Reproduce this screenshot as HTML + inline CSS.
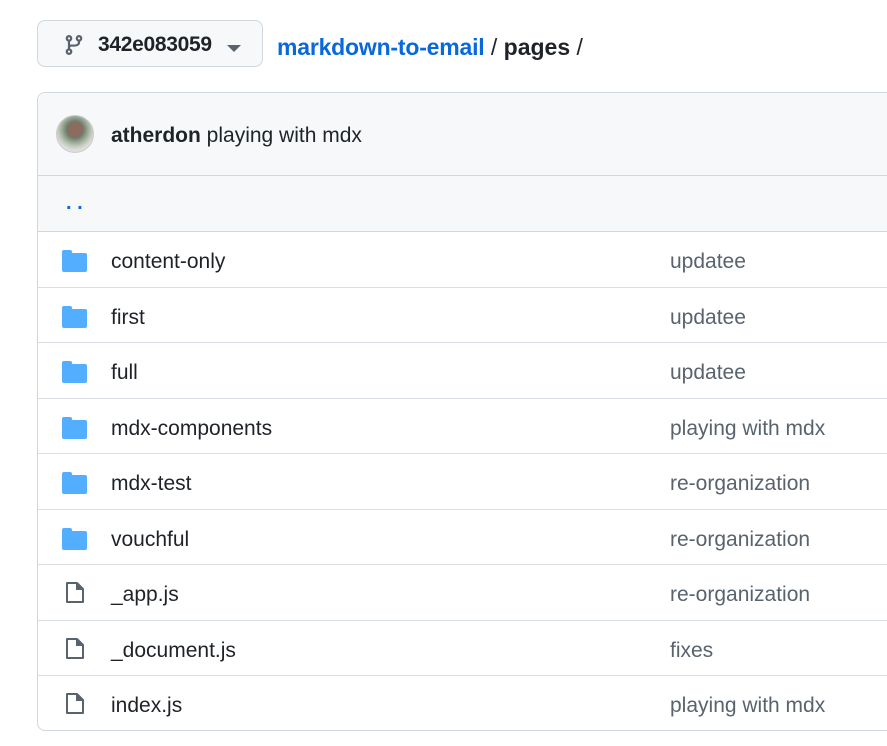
<!DOCTYPE html>
<html><head><style>
body{margin:0;background:#fff;font-family:"Liberation Sans",sans-serif;color:#1f2328;width:887px;height:746px;overflow:hidden;position:relative}
.btn{position:absolute;left:37px;top:20px;width:226px;height:47px;border:1px solid #d0d7de;border-radius:8px;background:#f6f8fa;box-sizing:border-box}
.btn .t{position:absolute;left:60px;top:12px;font-size:21px;font-weight:bold;color:#1f2328;letter-spacing:-0.3px}
.crumb{position:absolute;left:277px;top:33px;font-size:23px;line-height:28px}
.crumb a{color:#0969da;font-weight:bold;text-decoration:none;letter-spacing:-0.2px}
.box{position:absolute;left:37px;top:92px;width:900px;height:639px;border:1px solid #d0d7de;border-radius:8px;box-sizing:border-box;overflow:hidden}
.hdr{height:82px;background:#f6f8fa;border-bottom:1px solid #d0d7de;position:relative}
.av{position:absolute;left:18px;top:22px;width:36px;height:36px;border-radius:50%;background:radial-gradient(circle at 50% 38%,#8a6d5e 0 28%,#6b7d6c 29%,#b8c4b0 55%,#ddd 70%);border:1px solid #ccc}
.hdr .t{position:absolute;left:73px;top:31px;font-size:21px}
.dots{height:55px;background:#f6f8fa;border-bottom:1px solid #d0d7de;position:relative}
.dots span{position:absolute;left:28px;top:16px;color:#0969da;font-size:20px;font-weight:bold}
.row{height:55.5px;border-bottom:1px solid #d8dee4;position:relative;box-sizing:border-box}
.row:last-child{border-bottom:none}
.row .n{position:absolute;left:73px;top:18px;font-size:21px}
.row .m{position:absolute;left:632px;top:18px;font-size:21px;color:#59636e}
.row svg{position:absolute;left:24px;top:18px}
</style></head><body>
<div class="btn"><svg style="position:absolute;left:27px;top:14px" width="18" height="20" viewBox="0 0 16 18" fill="none" stroke="#59636e" stroke-width="2"><circle cx="3.5" cy="3" r="2"/><circle cx="3.5" cy="15" r="2"/><circle cx="12.5" cy="3" r="2"/><path d="M3.5 5v8M12.5 5v1.5c0 2-2 3-4 3H5.5c-1 0-2 .8-2 2"/></svg><span class="t">342e083059</span><svg style="position:absolute;left:189px;top:24px" width="14" height="8"><path d="M0 0h14L7 7z" fill="#59636e"/></svg></div>
<div class="crumb"><a>markdown-to-email</a> / <b>pages</b> /</div>
<div class="box">
<div class="hdr"><div class="av"></div><div class="t"><b>atherdon</b> playing with mdx</div></div>
<div class="dots"><span>. .</span></div>
<div class="row"><svg width="25" height="22"><rect x="0" y="0" width="10" height="6" rx="2" fill="#54aeff"/><rect x="0" y="3" width="25" height="19" rx="2" fill="#54aeff"/></svg><span class="n">content-only</span><span class="m">updatee</span></div>
<div class="row"><svg width="25" height="22"><rect x="0" y="0" width="10" height="6" rx="2" fill="#54aeff"/><rect x="0" y="3" width="25" height="19" rx="2" fill="#54aeff"/></svg><span class="n">first</span><span class="m">updatee</span></div>
<div class="row"><svg width="25" height="22"><rect x="0" y="0" width="10" height="6" rx="2" fill="#54aeff"/><rect x="0" y="3" width="25" height="19" rx="2" fill="#54aeff"/></svg><span class="n">full</span><span class="m">updatee</span></div>
<div class="row"><svg width="25" height="22"><rect x="0" y="0" width="10" height="6" rx="2" fill="#54aeff"/><rect x="0" y="3" width="25" height="19" rx="2" fill="#54aeff"/></svg><span class="n">mdx-components</span><span class="m">playing with mdx</span></div>
<div class="row"><svg width="25" height="22"><rect x="0" y="0" width="10" height="6" rx="2" fill="#54aeff"/><rect x="0" y="3" width="25" height="19" rx="2" fill="#54aeff"/></svg><span class="n">mdx-test</span><span class="m">re-organization</span></div>
<div class="row"><svg width="25" height="22"><rect x="0" y="0" width="10" height="6" rx="2" fill="#54aeff"/><rect x="0" y="3" width="25" height="19" rx="2" fill="#54aeff"/></svg><span class="n">vouchful</span><span class="m">re-organization</span></div>
<div class="row"><svg width="20" height="22" style="left:27px;top:17px"><path d="M2 1h10l6 6v13H2z" fill="none" stroke="#59636e" stroke-width="2" stroke-linejoin="round"/><path d="M11 1v7h7" fill="#59636e"/></svg><span class="n">_app.js</span><span class="m">re-organization</span></div>
<div class="row"><svg width="20" height="22" style="left:27px;top:17px"><path d="M2 1h10l6 6v13H2z" fill="none" stroke="#59636e" stroke-width="2" stroke-linejoin="round"/><path d="M11 1v7h7" fill="#59636e"/></svg><span class="n">_document.js</span><span class="m">fixes</span></div>
<div class="row"><svg width="20" height="22" style="left:27px;top:17px"><path d="M2 1h10l6 6v13H2z" fill="none" stroke="#59636e" stroke-width="2" stroke-linejoin="round"/><path d="M11 1v7h7" fill="#59636e"/></svg><span class="n">index.js</span><span class="m">playing with mdx</span></div>
</div>
</body></html>
